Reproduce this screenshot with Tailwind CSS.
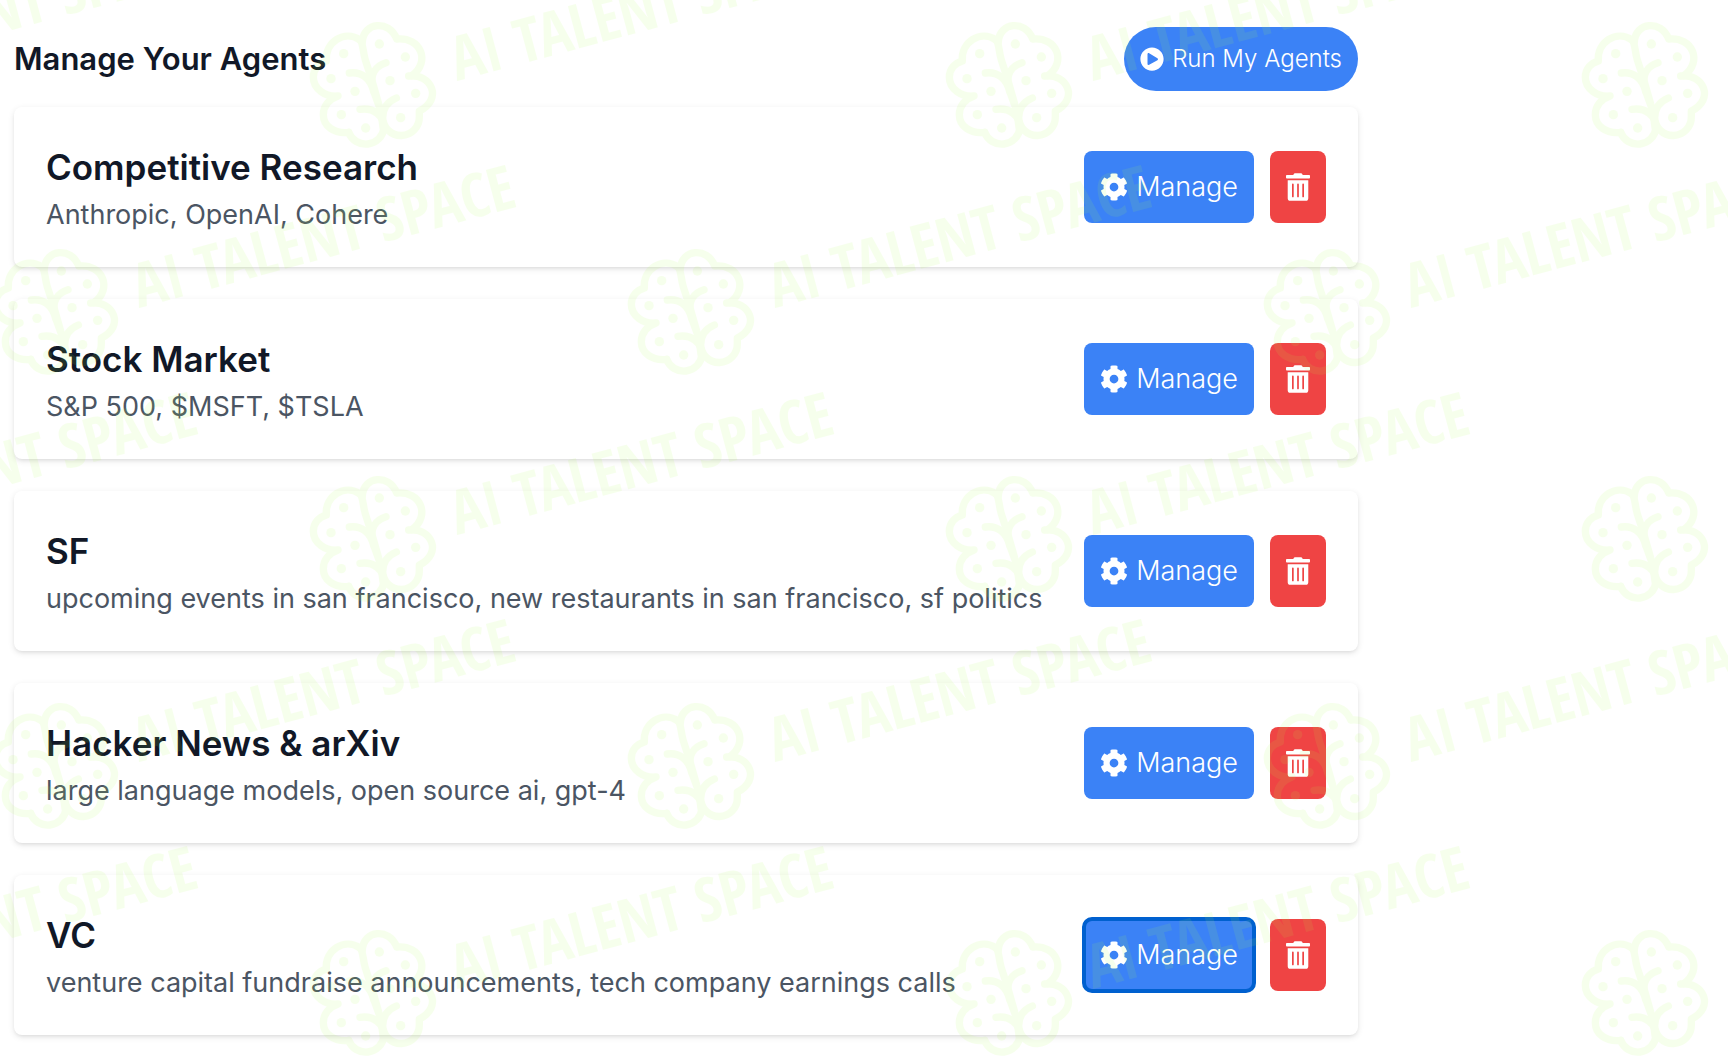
<!DOCTYPE html>
<html lang="en">
<head>
    <meta charset="UTF-8" />
    <meta name="viewport" content="width=device-width, initial-scale=1.0" />
    <title>Manage Your Agents</title>
    <script src="https://cdn.jsdelivr.net/npm/@tailwindcss/browser@4"></script>
</head>
<body class="relative min-h-screen bg-white font-[Inter,sans-serif] text-[#111827]">

<!-- Icon sprite -->
<svg class="hidden" xmlns="http://www.w3.org/2000/svg">
    <symbol id="icon-play" viewBox="0 0 512 512">
        <path d="M256 8C119 8 8 119 8 256s111 248 248 248 248-111 248-248S393 8 256 8zm115.7 272l-176 101c-15.8 8.8-35.7-2.5-35.7-21V152c0-18.4 19.8-29.8 35.7-21l176 107c16.4 9.2 16.4 32.9 0 42z" />
    </symbol>
    <symbol id="icon-cog" viewBox="0 0 512 512">
        <path d="M487.4 315.7l-42.6-24.6c4.3-23.2 4.3-47 0-70.2l42.6-24.6c4.9-2.8 7.1-8.6 5.5-14-11.1-35.6-30-67.8-54.7-94.6-3.8-4.1-10-5.1-14.8-2.3L380.8 110c-17.9-15.4-38.5-27.3-60.8-35.1V25.8c0-5.6-3.9-10.5-9.4-11.7-36.7-8.2-74.3-7.8-109.2 0-5.5 1.2-9.4 6.1-9.4 11.7V75c-22.2 7.9-42.8 19.8-60.8 35.1L88.7 85.5c-4.9-2.8-11-1.9-14.8 2.3-24.7 26.7-43.6 58.9-54.7 94.6-1.7 5.4.6 11.2 5.5 14L67.3 221c-4.3 23.2-4.3 47 0 70.2l-42.6 24.6c-4.9 2.8-7.1 8.6-5.5 14 11.1 35.6 30 67.8 54.7 94.6 3.8 4.1 10 5.1 14.8 2.3l42.6-24.6c17.9 15.4 38.5 27.3 60.8 35.1v49.2c0 5.6 3.9 10.5 9.4 11.7 36.7 8.2 74.3 7.8 109.2 0 5.5-1.2 9.4-6.1 9.4-11.7v-49.2c22.2-7.9 42.8-19.8 60.8-35.1l42.6 24.6c4.9 2.8 11 1.9 14.8-2.3 24.7-26.7 43.6-58.9 54.7-94.6 1.5-5.5-.7-11.3-5.6-14.1zM256 336c-44.1 0-80-35.9-80-80s35.9-80 80-80 80 35.9 80 80-35.9 80-80 80z" />
    </symbol>
    <symbol id="icon-trash" viewBox="0 0 448 512">
        <path d="M32 464a48 48 0 0 0 48 48h288a48 48 0 0 0 48-48V128H32zm272-256a16 16 0 0 1 32 0v224a16 16 0 0 1-32 0zm-96 0a16 16 0 0 1 32 0v224a16 16 0 0 1-32 0zm-96 0a16 16 0 0 1 32 0v224a16 16 0 0 1-32 0zM432 32H312l-9.4-18.7A24 24 0 0 0 281.1 0H166.8a23.72 23.72 0 0 0-21.4 13.3L136 32H16A16 16 0 0 0 0 48v32a16 16 0 0 0 16 16h416a16 16 0 0 0 16-16V48a16 16 0 0 0-16-16z" />
    </symbol>
</svg>

<main class="ml-[14px] max-w-[1344px] pt-[27px] pb-[27px]">
    <!-- Page header -->
    <header class="mb-4 flex items-center justify-between">
        <h1 class="text-[31px] font-semibold">Manage Your Agents</h1>
        <button type="button" class="flex h-16 items-center gap-2 rounded-full bg-[#3b82f6] px-4 text-2xl font-light text-white">
            <svg class="size-6 fill-current" aria-hidden="true"><use href="#icon-play" /></svg>
            Run My Agents
        </button>
    </header>

    <!-- Agent list -->
    <ul class="flex flex-col gap-8">
        <li class="flex items-center justify-between rounded-lg bg-white p-8 shadow-[0_2px_6px_rgba(0,0,0,0.1),0_2px_4px_-2px_rgba(0,0,0,0.1)]">
            <div>
                <h2 class="text-[35px] leading-14 font-semibold">Competitive Research</h2>
                <p class="text-[27px] leading-10 text-[#4b5563]">Anthropic, OpenAI, Cohere</p>
            </div>
            <div class="flex gap-4">
                <button type="button" class="flex h-18 items-center gap-2 rounded-lg bg-[#3b82f6] px-4 text-[27px] font-light text-white">
                    <svg class="size-7 fill-current" aria-hidden="true"><use href="#icon-cog" /></svg>
                    Manage
                </button>
                <button type="button" aria-label="Delete Competitive Research" class="flex h-18 items-center rounded-lg bg-[#ef4444] px-4 text-white">
                    <svg class="h-7 w-6 fill-current" aria-hidden="true"><use href="#icon-trash" /></svg>
                </button>
            </div>
        </li>
        <li class="flex items-center justify-between rounded-lg bg-white p-8 shadow-[0_2px_6px_rgba(0,0,0,0.1),0_2px_4px_-2px_rgba(0,0,0,0.1)]">
            <div>
                <h2 class="text-[35px] leading-14 font-semibold">Stock Market</h2>
                <p class="text-[27px] leading-10 text-[#4b5563]">S&amp;P 500, $MSFT, $TSLA</p>
            </div>
            <div class="flex gap-4">
                <button type="button" class="flex h-18 items-center gap-2 rounded-lg bg-[#3b82f6] px-4 text-[27px] font-light text-white">
                    <svg class="size-7 fill-current" aria-hidden="true"><use href="#icon-cog" /></svg>
                    Manage
                </button>
                <button type="button" aria-label="Delete Stock Market" class="flex h-18 items-center rounded-lg bg-[#ef4444] px-4 text-white">
                    <svg class="h-7 w-6 fill-current" aria-hidden="true"><use href="#icon-trash" /></svg>
                </button>
            </div>
        </li>
        <li class="flex items-center justify-between rounded-lg bg-white p-8 shadow-[0_2px_6px_rgba(0,0,0,0.1),0_2px_4px_-2px_rgba(0,0,0,0.1)]">
            <div>
                <h2 class="text-[35px] leading-14 font-semibold">SF</h2>
                <p class="text-[27px] leading-10 text-[#4b5563]">upcoming events in san francisco, new restaurants in san francisco, sf politics</p>
            </div>
            <div class="flex gap-4">
                <button type="button" class="flex h-18 items-center gap-2 rounded-lg bg-[#3b82f6] px-4 text-[27px] font-light text-white">
                    <svg class="size-7 fill-current" aria-hidden="true"><use href="#icon-cog" /></svg>
                    Manage
                </button>
                <button type="button" aria-label="Delete SF" class="flex h-18 items-center rounded-lg bg-[#ef4444] px-4 text-white">
                    <svg class="h-7 w-6 fill-current" aria-hidden="true"><use href="#icon-trash" /></svg>
                </button>
            </div>
        </li>
        <li class="flex items-center justify-between rounded-lg bg-white p-8 shadow-[0_2px_6px_rgba(0,0,0,0.1),0_2px_4px_-2px_rgba(0,0,0,0.1)]">
            <div>
                <h2 class="text-[35px] leading-14 font-semibold">Hacker News &amp; arXiv</h2>
                <p class="text-[27px] leading-10 text-[#4b5563]">large language models, open source ai, gpt-4</p>
            </div>
            <div class="flex gap-4">
                <button type="button" class="flex h-18 items-center gap-2 rounded-lg bg-[#3b82f6] px-4 text-[27px] font-light text-white">
                    <svg class="size-7 fill-current" aria-hidden="true"><use href="#icon-cog" /></svg>
                    Manage
                </button>
                <button type="button" aria-label="Delete Hacker News &amp; arXiv" class="flex h-18 items-center rounded-lg bg-[#ef4444] px-4 text-white">
                    <svg class="h-7 w-6 fill-current" aria-hidden="true"><use href="#icon-trash" /></svg>
                </button>
            </div>
        </li>
        <li class="flex items-center justify-between rounded-lg bg-white p-8 shadow-[0_2px_6px_rgba(0,0,0,0.1),0_2px_4px_-2px_rgba(0,0,0,0.1)]">
            <div>
                <h2 class="text-[35px] leading-14 font-semibold">VC</h2>
                <p class="text-[27px] leading-10 text-[#4b5563]">venture capital fundraise announcements, tech company earnings calls</p>
            </div>
            <div class="flex gap-4">
                <button type="button" class="flex h-18 items-center gap-2 rounded-lg bg-[#3b82f6] px-4 text-[27px] font-light text-white outline-4 -outline-offset-2 outline-[#0060cf]">
                    <svg class="size-7 fill-current" aria-hidden="true"><use href="#icon-cog" /></svg>
                    Manage
                </button>
                <button type="button" aria-label="Delete VC" class="flex h-18 items-center rounded-lg bg-[#ef4444] px-4 text-white">
                    <svg class="h-7 w-6 fill-current" aria-hidden="true"><use href="#icon-trash" /></svg>
                </button>
            </div>
        </li>
    </ul>
</main>

<!-- Watermark, tiled over the whole page -->
<svg class="pointer-events-none absolute inset-0 h-full w-full opacity-10" aria-hidden="true" xmlns="http://www.w3.org/2000/svg">
    <defs>
        <g id="watermark">
            <g transform="scale(0.3333) translate(-213 -213)" fill="none" stroke="#afff4b" stroke-width="22" stroke-linecap="round" stroke-linejoin="round">
                <!-- left half -->
                <path d="M174 78C128 46 68 84 73 141C50 148 34 165 34 190C34 225 70 250 108 246C82 255 64 275 64 302C64 335 95 360 140 355" />
                <path d="M174 286C215 280 246 305 246 342A55 55 0 0 1 140 355" />
                <path d="M142 177C178 172 205 193 215 232" />
                <!-- right half -->
                <path d="M181 84C184 24 262 16 284 75C356 68 387 142 330 185" />
                <path d="M320 186C388 178 424 255 352 291V308A55 55 0 0 1 242 311C242 285 255 264 283 252" />
                <path d="M252 146C222 155 205 180 211 215" />
                <!-- centre line -->
                <path d="M174 78C184 88 182 112 190 138L207 190L230 270Q238 295 243 340M215 232L240 300" />
                <g fill="#afff4b" stroke="none">
                    <circle cx="232" cy="90" r="14" />
                    <circle cx="310" cy="129" r="14" />
                    <circle cx="264" cy="200" r="14" />
                    <circle cx="341" cy="238" r="14" />
                    <circle cx="296" cy="311" r="14" />
                    <circle cx="191" cy="342" r="14" />
                    <circle cx="118" cy="302" r="14" />
                    <circle cx="159" cy="232" r="14" />
                    <circle cx="87" cy="194" r="14" />
                    <circle cx="125" cy="119" r="14" />
                </g>
            </g>
            <text class="font-['Open_Sans_Condensed','Roboto_Condensed',sans-serif] text-[61px] font-bold" transform="translate(84 -4) rotate(-15)" fill="#afff4b">AI TALENT SPACE</text>
        </g>
        <pattern id="watermark-tile" x="-45" y="152" width="636" height="454" patternUnits="userSpaceOnUse">
            <use href="#watermark" x="100" y="160" />
            <use href="#watermark" x="418" y="387" />
            <use href="#watermark" x="-218" y="387" />
        </pattern>
    </defs>
    <rect width="100%" height="100%" fill="url(#watermark-tile)" />
</svg>
</body>
</html>
